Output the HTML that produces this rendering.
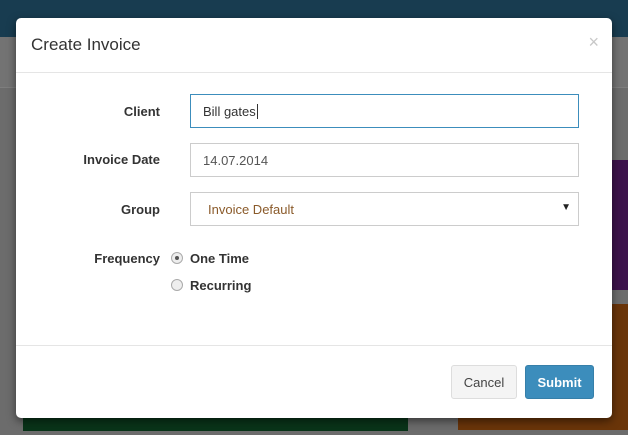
<!DOCTYPE html>
<html><head><meta charset="utf-8"><style>
*{box-sizing:border-box;margin:0;padding:0}
body{width:628px;height:435px;overflow:hidden;background:#6c6c6c;font-family:"Liberation Sans",sans-serif;position:relative}
.top{position:absolute;left:0;top:0;width:628px;height:37px;background:#183c50}
.band{position:absolute;left:0;top:37px;width:628px;height:51px;background:#737373;border-bottom:1px solid #7e7e7e}
.green{position:absolute;left:23px;top:400px;width:385px;height:31px;background:#093419}
.orange{position:absolute;left:458px;top:304px;width:170px;height:126px;background:#6a3509}
.purple{position:absolute;left:612px;top:160px;width:16px;height:130px;background:#3c124b}
.modal{position:absolute;left:16px;top:18px;width:596px;height:400px;background:#fff;border-radius:5px;box-shadow:0 3px 9px rgba(0,0,0,.5)}
.hd{height:55px;border-bottom:1px solid #e5e5e5;position:relative}
.hd h4{position:absolute;left:15px;top:17px;font-size:17px;font-weight:normal;color:#333}
.x{position:absolute;right:13px;top:14px;font-size:18px;color:#c8c8c8}
.lbl{position:absolute;right:452px;font-size:13px;font-weight:bold;color:#333;text-align:right}
.inp{position:absolute;left:174px;width:389px;height:34px;border:1px solid #ccc;font-size:13px;color:#555;padding:9px 12px}
.ft{position:absolute;left:0;top:327px;width:596px;border-top:1px solid #e5e5e5}
.btn{position:absolute;top:347px;height:34px;border-radius:3px;font-size:13px;padding-top:9px;text-align:center}
.r{position:absolute;left:155px;width:12px;height:12px;border-radius:50%;border:1px solid #aaa;background:#eee}
.rt{position:absolute;left:174px;font-size:13px;font-weight:bold;color:#333}
</style></head><body>
<div class="top"></div><div class="band"></div>
<div class="green"></div><div class="orange"></div><div class="purple"></div>
<div class="modal">
<div class="hd"><h4>Create Invoice</h4><span class="x">×</span></div>
<div class="lbl" style="top:86px">Client</div>
<div class="inp" style="top:76px;border-color:#3c8dbc;color:#333">Bill gates<span style="border-left:1px solid #333;margin-left:1px"></span></div>
<div class="lbl" style="top:134px">Invoice Date</div>
<div class="inp" style="top:125px">14.07.2014</div>
<div class="lbl" style="top:184px">Group</div>
<div class="inp" style="top:174px;padding-left:17px;color:#8a5a2a">Invoice Default<span style="position:absolute;right:7px;top:9px;font-size:10px;color:#222">▼</span></div>
<div class="lbl" style="top:233px">Frequency</div>
<div class="r" style="top:234px"><div style="width:4px;height:4px;border-radius:50%;background:#555;margin:3px"></div></div>
<div class="rt" style="top:233px">One Time</div>
<div class="r" style="top:261px"></div>
<div class="rt" style="top:260px">Recurring</div>
<div class="ft"></div>
<div class="btn" style="left:435px;width:66px;border:1px solid #ddd;background:#f4f4f4;color:#444">Cancel</div>
<div class="btn" style="left:509px;width:69px;background:#3c8dbc;border:1px solid #367fa9;color:#fff;font-weight:bold">Submit</div>
</div>
</body></html>
